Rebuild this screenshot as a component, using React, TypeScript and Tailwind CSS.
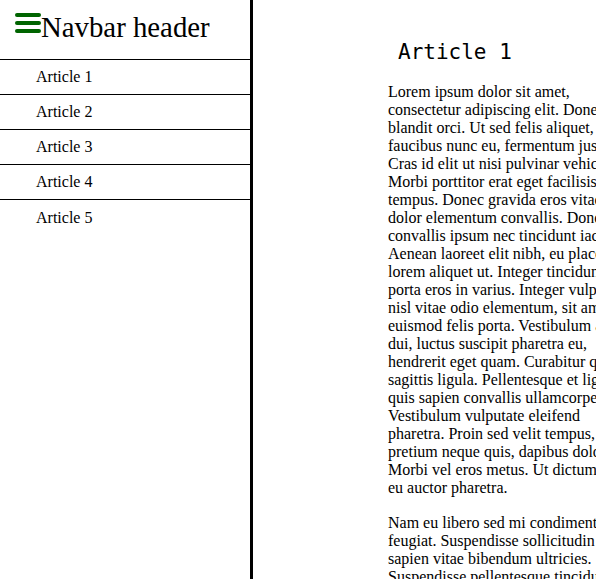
const articles = ["Article 1", "Article 2", "Article 3", "Article 4", "Article 5"];

const p1 =
  "Lorem ipsum dolor sit amet, consectetur adipiscing elit. Donec blandit orci. Ut sed felis aliquet, faucibus nunc eu, fermentum justo. Cras id elit ut nisi pulvinar vehicula. Morbi porttitor erat eget facilisis tempus. Donec gravida eros vitae dolor elementum convallis. Donec convallis ipsum nec tincidunt iaculis. Aenean laoreet elit nibh, eu placerat lorem aliquet ut. Integer tincidunt porta eros in varius. Integer vulputate nisl vitae odio elementum, sit amet euismod felis porta. Vestibulum at dui, luctus suscipit pharetra eu, hendrerit eget quam. Curabitur quis sagittis ligula. Pellentesque et ligula quis sapien convallis ullamcorper. Vestibulum vulputate eleifend pharetra. Proin sed velit tempus, pretium neque quis, dapibus dolor. Morbi vel eros metus. Ut dictum ante eu auctor pharetra.";

const p2 =
  "Nam eu libero sed mi condimentum feugiat. Suspendisse sollicitudin erat sapien vitae bibendum ultricies. Suspendisse pellentesque tincidunt nulla, vel tempor nisi lacinia sit amet. Praesent a dolor nec mauris aliquet euismod.";

const Hamburger = () => (
  <svg width="26" height="21" viewBox="0 0 26 21" className="shrink-0">
    <rect x="0" y="0" width="26" height="4" rx="2" fill="#006400" />
    <rect x="0" y="8" width="26" height="4" rx="2" fill="#006400" />
    <rect x="0" y="16" width="26" height="4" rx="2" fill="#006400" />
  </svg>
);

export default function App() {
  return (
    <div className="flex h-[579px] w-full overflow-hidden bg-white text-black font-['Liberation_Serif','Times_New_Roman',serif]">
      <aside className="w-[253px] shrink-0 border-r-[3px] border-black">
        <div className="flex h-[60px] items-start border-b border-black pl-[15px] pt-[13px]">
          <Hamburger />
          <h1 className="-mt-[2px] text-[28.8px] leading-[33px]">Navbar header</h1>
        </div>
        <nav>
          {articles.map((a, i) => (
            <div
              key={a}
              className={
                i < articles.length - 1
                  ? "flex h-[35px] items-center border-b border-black pl-[36px] text-base"
                  : "flex h-[35px] items-center pl-[36px] text-base"
              }
            >
              {a}
            </div>
          ))}
        </nav>
      </aside>
      <main className="shrink-0 pl-[135px] pt-[38px]">
        <h2 className="ml-[10px] font-['DejaVu_Sans_Mono',monospace] text-[21px] leading-[28px]">
          Article 1
        </h2>
        <div className="mt-[17px] w-[245px] text-base leading-[18px]">
          <p>{p1}</p>
          <p className="mt-[17px]">{p2}</p>
        </div>
      </main>
    </div>
  );
}
